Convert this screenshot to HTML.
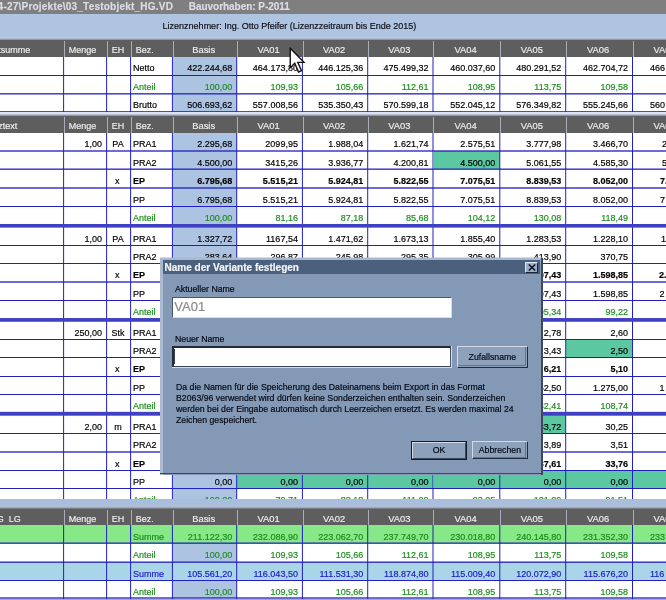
<!DOCTYPE html>
<html lang="de"><head><meta charset="utf-8"><title>Name der Variante festlegen</title><style>
html,body{margin:0;padding:0;background:#fff;}
body{width:666px;height:600px;overflow:hidden;position:relative;font-family:"Liberation Sans",sans-serif;}
#r{position:absolute;left:0;top:0;width:666px;height:600px;overflow:hidden;will-change:transform;}
#r div,#r svg{position:absolute;}
.t{white-space:pre;-webkit-text-stroke:0.18px currentColor;}
.ms{font-size:9.5px;line-height:12px;color:#050a16;-webkit-text-stroke:0.2px #050a16;transform:scaleX(0.9186);transform-origin:0 0;}
.ms.c{text-align:center;transform-origin:50% 0;}
</style></head><body><div id="r">
<div style="left:0px;top:0px;width:666px;height:14px;background:#7f7f7f;"></div>
<div class="t" style="top:1.13px;line-height:12px;font-size:10px;color:#dcdce6;font-weight:bold;left:-2.4px;letter-spacing:0.22px;">4-27\Projekte\03_Testobjekt_HG.VD</div>
<div class="t" style="top:1.13px;line-height:12px;font-size:10px;color:#dcdce6;font-weight:bold;left:188.8px;letter-spacing:-0.04px;">Bauvorhaben: P-2011</div>
<div style="left:0px;top:14px;width:666px;height:23px;background:#aec4e1;"></div>
<div style="left:0px;top:37px;width:666px;height:1px;background:#bccbe2;"></div>
<div style="left:0px;top:38px;width:666px;height:1px;background:#aab6ca;"></div>
<div style="left:0px;top:39px;width:666px;height:1px;background:#8e98aa;"></div>
<div class="t" style="top:20.38px;line-height:12px;font-size:9px;color:#101018;left:162.6px;">Lizenznehmer: Ing. Otto Pfeifer (Lizenzzeitraum bis Ende 2015)</div>
<div style="left:0px;top:40px;width:666px;height:17px;background:#5e5e5e;"></div>
<div style="left:64px;top:41px;width:1px;height:16px;background:#a9adb8;"></div>
<div style="left:107px;top:41px;width:1px;height:16px;background:#a9adb8;"></div>
<div style="left:131px;top:41px;width:1px;height:16px;background:#a9adb8;"></div>
<div style="left:173px;top:41px;width:1px;height:16px;background:#a9adb8;"></div>
<div style="left:237px;top:41px;width:1px;height:16px;background:#a9adb8;"></div>
<div style="left:303px;top:41px;width:1px;height:16px;background:#a9adb8;"></div>
<div style="left:368px;top:41px;width:1px;height:16px;background:#a9adb8;"></div>
<div style="left:433px;top:41px;width:1px;height:16px;background:#a9adb8;"></div>
<div style="left:500px;top:41px;width:1px;height:16px;background:#a9adb8;"></div>
<div style="left:566px;top:41px;width:1px;height:16px;background:#a9adb8;"></div>
<div style="left:633px;top:41px;width:1px;height:16px;background:#a9adb8;"></div>
<div class="t" style="top:44.48px;line-height:12px;font-size:9px;color:#ececec;left:-1.7px;">tsumme</div>
<div class="t" style="top:44.48px;line-height:12px;font-size:9px;color:#ececec;left:68.7px;">Menge</div>
<div class="t" style="top:44.48px;line-height:12px;font-size:9px;color:#ececec;left:111.7px;">EH</div>
<div class="t" style="top:44.48px;line-height:12px;font-size:9px;color:#ececec;left:135.7px;">Bez.</div>
<div class="t" style="top:44.34px;line-height:12px;font-size:9.4px;color:#ececec;left:103.65px;width:200px;text-align:center;">Basis</div>
<div class="t" style="top:44.34px;line-height:12px;font-size:9.4px;color:#ececec;left:168.64999999999998px;width:200px;text-align:center;">VA01</div>
<div class="t" style="top:44.34px;line-height:12px;font-size:9.4px;color:#ececec;left:234.14999999999998px;width:200px;text-align:center;">VA02</div>
<div class="t" style="top:44.34px;line-height:12px;font-size:9.4px;color:#ececec;left:299.45000000000005px;width:200px;text-align:center;">VA03</div>
<div class="t" style="top:44.34px;line-height:12px;font-size:9.4px;color:#ececec;left:365.5px;width:200px;text-align:center;">VA04</div>
<div class="t" style="top:44.34px;line-height:12px;font-size:9.4px;color:#ececec;left:431.85px;width:200px;text-align:center;">VA05</div>
<div class="t" style="top:44.34px;line-height:12px;font-size:9.4px;color:#ececec;left:498.20000000000005px;width:200px;text-align:center;">VA06</div>
<div class="t" style="top:44.34px;line-height:12px;font-size:9.4px;color:#ececec;left:564.6px;width:200px;text-align:center;">VA07</div>
<div style="left:173px;top:56.8px;width:64px;height:18.5px;background:#adc3e2;"></div>
<div class="t" style="top:62.38px;line-height:12px;font-size:9px;color:#000;left:133px;">Netto</div>
<div class="t" style="top:62.38px;line-height:12px;font-size:9px;color:#000;right:433.8px;text-align:right;">422.244,68</div>
<div class="t" style="top:62.38px;line-height:12px;font-size:9px;color:#000;right:368.1px;text-align:right;">464.173,80</div>
<div class="t" style="top:62.38px;line-height:12px;font-size:9px;color:#000;right:302.8px;text-align:right;">446.125,36</div>
<div class="t" style="top:62.38px;line-height:12px;font-size:9px;color:#000;right:237.5px;text-align:right;">475.499,32</div>
<div class="t" style="top:62.38px;line-height:12px;font-size:9px;color:#000;right:170.7px;text-align:right;">460.037,60</div>
<div class="t" style="top:62.38px;line-height:12px;font-size:9px;color:#000;right:104.79999999999995px;text-align:right;">480.291,52</div>
<div class="t" style="top:62.38px;line-height:12px;font-size:9px;color:#000;right:38.0px;text-align:right;">462.704,72</div>
<div class="t" style="top:62.38px;line-height:12px;font-size:9px;color:#000;left:650px;">466</div>
<div style="left:173px;top:75.3px;width:64px;height:18.5px;background:#adc3e2;"></div>
<div class="t" style="top:80.88px;line-height:12px;font-size:9px;color:#1e8c1e;left:133px;">Anteil</div>
<div class="t" style="top:80.88px;line-height:12px;font-size:9px;color:#1e8c1e;right:433.8px;text-align:right;">100,00</div>
<div class="t" style="top:80.88px;line-height:12px;font-size:9px;color:#1e8c1e;right:368.1px;text-align:right;">109,93</div>
<div class="t" style="top:80.88px;line-height:12px;font-size:9px;color:#1e8c1e;right:302.8px;text-align:right;">105,66</div>
<div class="t" style="top:80.88px;line-height:12px;font-size:9px;color:#1e8c1e;right:237.5px;text-align:right;">112,61</div>
<div class="t" style="top:80.88px;line-height:12px;font-size:9px;color:#1e8c1e;right:170.7px;text-align:right;">108,95</div>
<div class="t" style="top:80.88px;line-height:12px;font-size:9px;color:#1e8c1e;right:104.79999999999995px;text-align:right;">113,75</div>
<div class="t" style="top:80.88px;line-height:12px;font-size:9px;color:#1e8c1e;right:38.0px;text-align:right;">109,58</div>
<div style="left:173px;top:93.8px;width:64px;height:18.0px;background:#adc3e2;"></div>
<div class="t" style="top:99.38px;line-height:12px;font-size:9px;color:#000;left:133px;">Brutto</div>
<div class="t" style="top:99.38px;line-height:12px;font-size:9px;color:#000;right:433.8px;text-align:right;">506.693,62</div>
<div class="t" style="top:99.38px;line-height:12px;font-size:9px;color:#000;right:368.1px;text-align:right;">557.008,56</div>
<div class="t" style="top:99.38px;line-height:12px;font-size:9px;color:#000;right:302.8px;text-align:right;">535.350,43</div>
<div class="t" style="top:99.38px;line-height:12px;font-size:9px;color:#000;right:237.5px;text-align:right;">570.599,18</div>
<div class="t" style="top:99.38px;line-height:12px;font-size:9px;color:#000;right:170.7px;text-align:right;">552.045,12</div>
<div class="t" style="top:99.38px;line-height:12px;font-size:9px;color:#000;right:104.79999999999995px;text-align:right;">576.349,82</div>
<div class="t" style="top:99.38px;line-height:12px;font-size:9px;color:#000;right:38.0px;text-align:right;">555.245,66</div>
<div class="t" style="top:99.38px;line-height:12px;font-size:9px;color:#000;left:650px;">560</div>
<div style="left:63px;top:57px;width:1px;height:55px;background:#2020be;opacity:0.90;"></div>
<div style="left:64px;top:57px;width:1px;height:55px;background:#2020be;opacity:0.10;"></div>
<div style="left:106px;top:57px;width:1px;height:55px;background:#2020be;opacity:0.90;"></div>
<div style="left:107px;top:57px;width:1px;height:55px;background:#2020be;opacity:0.10;"></div>
<div style="left:130px;top:57px;width:1px;height:55px;background:#2020be;opacity:0.90;"></div>
<div style="left:131px;top:57px;width:1px;height:55px;background:#2020be;opacity:0.10;"></div>
<div style="left:171px;top:57px;width:1px;height:55px;background:#2020be;opacity:0.10;"></div>
<div style="left:172px;top:57px;width:1px;height:55px;background:#2020be;opacity:0.90;"></div>
<div style="left:236px;top:57px;width:1px;height:55px;background:#2020be;opacity:0.80;"></div>
<div style="left:237px;top:57px;width:1px;height:55px;background:#2020be;opacity:0.20;"></div>
<div style="left:301px;top:57px;width:1px;height:55px;background:#2020be;opacity:0.10;"></div>
<div style="left:302px;top:57px;width:1px;height:55px;background:#2020be;opacity:0.90;"></div>
<div style="left:367px;top:57px;width:1px;height:55px;background:#2020be;opacity:0.80;"></div>
<div style="left:368px;top:57px;width:1px;height:55px;background:#2020be;opacity:0.20;"></div>
<div style="left:432px;top:57px;width:1px;height:55px;background:#2020be;opacity:0.50;"></div>
<div style="left:433px;top:57px;width:1px;height:55px;background:#2020be;opacity:0.50;"></div>
<div style="left:499px;top:57px;width:1px;height:55px;background:#2020be;opacity:0.70;"></div>
<div style="left:500px;top:57px;width:1px;height:55px;background:#2020be;opacity:0.30;"></div>
<div style="left:565px;top:57px;width:1px;height:55px;background:#2020be;opacity:0.80;"></div>
<div style="left:566px;top:57px;width:1px;height:55px;background:#2020be;opacity:0.20;"></div>
<div style="left:632px;top:57px;width:1px;height:55px;background:#2020be;"></div>
<div style="left:0px;top:75px;width:666px;height:1px;background:#2020be;"></div>
<div style="left:0px;top:93px;width:666px;height:1px;background:#2020be;opacity:0.81;"></div>
<div style="left:0px;top:94px;width:666px;height:1px;background:#2020be;opacity:0.49;"></div>
<div style="left:0px;top:111px;width:666px;height:1px;background:#2020be;opacity:0.81;"></div>
<div style="left:0px;top:112px;width:666px;height:1px;background:#2020be;opacity:0.49;"></div>
<div style="left:0px;top:112px;width:666px;height:3px;background:#dde4f0;"></div>
<div style="left:0px;top:114px;width:666px;height:1px;background:#b4bedc;"></div>
<div style="left:0px;top:115px;width:666px;height:1px;background:#8b98c4;"></div>
<div style="left:0px;top:116px;width:666px;height:16.6px;background:#5e5e5e;"></div>
<div style="left:64px;top:117px;width:1px;height:15.600000000000001px;background:#a9adb8;"></div>
<div style="left:107px;top:117px;width:1px;height:15.600000000000001px;background:#a9adb8;"></div>
<div style="left:131px;top:117px;width:1px;height:15.600000000000001px;background:#a9adb8;"></div>
<div style="left:173px;top:117px;width:1px;height:15.600000000000001px;background:#a9adb8;"></div>
<div style="left:237px;top:117px;width:1px;height:15.600000000000001px;background:#a9adb8;"></div>
<div style="left:303px;top:117px;width:1px;height:15.600000000000001px;background:#a9adb8;"></div>
<div style="left:368px;top:117px;width:1px;height:15.600000000000001px;background:#a9adb8;"></div>
<div style="left:433px;top:117px;width:1px;height:15.600000000000001px;background:#a9adb8;"></div>
<div style="left:500px;top:117px;width:1px;height:15.600000000000001px;background:#a9adb8;"></div>
<div style="left:566px;top:117px;width:1px;height:15.600000000000001px;background:#a9adb8;"></div>
<div style="left:633px;top:117px;width:1px;height:15.600000000000001px;background:#a9adb8;"></div>
<div class="t" style="top:120.48px;line-height:12px;font-size:9px;color:#ececec;left:-1.7px;">ztext</div>
<div class="t" style="top:120.48px;line-height:12px;font-size:9px;color:#ececec;left:68.7px;">Menge</div>
<div class="t" style="top:120.48px;line-height:12px;font-size:9px;color:#ececec;left:111.7px;">EH</div>
<div class="t" style="top:120.48px;line-height:12px;font-size:9px;color:#ececec;left:135.7px;">Bez.</div>
<div class="t" style="top:120.34px;line-height:12px;font-size:9.4px;color:#ececec;left:103.65px;width:200px;text-align:center;">Basis</div>
<div class="t" style="top:120.34px;line-height:12px;font-size:9.4px;color:#ececec;left:168.64999999999998px;width:200px;text-align:center;">VA01</div>
<div class="t" style="top:120.34px;line-height:12px;font-size:9.4px;color:#ececec;left:234.14999999999998px;width:200px;text-align:center;">VA02</div>
<div class="t" style="top:120.34px;line-height:12px;font-size:9.4px;color:#ececec;left:299.45000000000005px;width:200px;text-align:center;">VA03</div>
<div class="t" style="top:120.34px;line-height:12px;font-size:9.4px;color:#ececec;left:365.5px;width:200px;text-align:center;">VA04</div>
<div class="t" style="top:120.34px;line-height:12px;font-size:9.4px;color:#ececec;left:431.85px;width:200px;text-align:center;">VA05</div>
<div class="t" style="top:120.34px;line-height:12px;font-size:9.4px;color:#ececec;left:498.20000000000005px;width:200px;text-align:center;">VA06</div>
<div class="t" style="top:120.34px;line-height:12px;font-size:9.4px;color:#ececec;left:564.6px;width:200px;text-align:center;">VA07</div>
<div style="left:173px;top:132.5px;width:64px;height:18.5px;background:#adc3e2;"></div>
<div class="t" style="top:138.08px;line-height:12px;font-size:9px;color:#000;right:563.9px;text-align:right;">1,00</div>
<div class="t" style="top:138.08px;line-height:12px;font-size:9px;color:#000;left:18.0px;width:200px;text-align:center;">PA</div>
<div class="t" style="top:138.08px;line-height:12px;font-size:9px;color:#000;left:133px;">PRA1</div>
<div class="t" style="top:138.08px;line-height:12px;font-size:9px;color:#000;right:433.8px;text-align:right;">2.295,68</div>
<div class="t" style="top:138.08px;line-height:12px;font-size:9px;color:#000;right:368.1px;text-align:right;">2099,95</div>
<div class="t" style="top:138.08px;line-height:12px;font-size:9px;color:#000;right:302.8px;text-align:right;">1.988,04</div>
<div class="t" style="top:138.08px;line-height:12px;font-size:9px;color:#000;right:237.5px;text-align:right;">1.621,74</div>
<div class="t" style="top:138.08px;line-height:12px;font-size:9px;color:#000;right:170.7px;text-align:right;">2.575,51</div>
<div class="t" style="top:138.08px;line-height:12px;font-size:9px;color:#000;right:104.79999999999995px;text-align:right;">3.777,98</div>
<div class="t" style="top:138.08px;line-height:12px;font-size:9px;color:#000;right:38.0px;text-align:right;">3.466,70</div>
<div class="t" style="top:138.08px;line-height:12px;font-size:9px;color:#000;left:662px;">2</div>
<div style="left:173px;top:151px;width:64px;height:18.19999999999999px;background:#adc3e2;"></div>
<div style="left:434px;top:151px;width:66px;height:18.19999999999999px;background:#5cc8a2;"></div>
<div class="t" style="top:156.58px;line-height:12px;font-size:9px;color:#000;left:133px;">PRA2</div>
<div class="t" style="top:156.58px;line-height:12px;font-size:9px;color:#000;right:433.8px;text-align:right;">4.500,00</div>
<div class="t" style="top:156.58px;line-height:12px;font-size:9px;color:#000;right:368.1px;text-align:right;">3415,26</div>
<div class="t" style="top:156.58px;line-height:12px;font-size:9px;color:#000;right:302.8px;text-align:right;">3.936,77</div>
<div class="t" style="top:156.58px;line-height:12px;font-size:9px;color:#000;right:237.5px;text-align:right;">4.200,81</div>
<div class="t" style="top:156.58px;line-height:12px;font-size:9px;color:#000;right:170.7px;text-align:right;">4.500,00</div>
<div class="t" style="top:156.58px;line-height:12px;font-size:9px;color:#000;right:104.79999999999995px;text-align:right;">5.061,55</div>
<div class="t" style="top:156.58px;line-height:12px;font-size:9px;color:#000;right:38.0px;text-align:right;">4.585,30</div>
<div class="t" style="top:156.58px;line-height:12px;font-size:9px;color:#000;left:662px;">5</div>
<div style="left:173px;top:169.2px;width:64px;height:18.80000000000001px;background:#adc3e2;"></div>
<div class="t" style="top:174.78px;line-height:12px;font-size:9px;color:#000;left:17.299999999999997px;width:200px;text-align:center;">x</div>
<div class="t" style="top:174.78px;line-height:12px;font-size:9px;color:#000;font-weight:bold;left:133px;">EP</div>
<div class="t" style="top:174.78px;line-height:12px;font-size:9px;color:#000;font-weight:bold;right:433.8px;text-align:right;">6.795,68</div>
<div class="t" style="top:174.78px;line-height:12px;font-size:9px;color:#000;font-weight:bold;right:368.1px;text-align:right;">5.515,21</div>
<div class="t" style="top:174.78px;line-height:12px;font-size:9px;color:#000;font-weight:bold;right:302.8px;text-align:right;">5.924,81</div>
<div class="t" style="top:174.78px;line-height:12px;font-size:9px;color:#000;font-weight:bold;right:237.5px;text-align:right;">5.822,55</div>
<div class="t" style="top:174.78px;line-height:12px;font-size:9px;color:#000;font-weight:bold;right:170.7px;text-align:right;">7.075,51</div>
<div class="t" style="top:174.78px;line-height:12px;font-size:9px;color:#000;font-weight:bold;right:104.79999999999995px;text-align:right;">8.839,53</div>
<div class="t" style="top:174.78px;line-height:12px;font-size:9px;color:#000;font-weight:bold;right:38.0px;text-align:right;">8.052,00</div>
<div class="t" style="top:174.78px;line-height:12px;font-size:9px;color:#000;font-weight:bold;left:660px;">7.</div>
<div style="left:173px;top:188px;width:64px;height:18.30000000000001px;background:#adc3e2;"></div>
<div class="t" style="top:193.58px;line-height:12px;font-size:9px;color:#000;left:133px;">PP</div>
<div class="t" style="top:193.58px;line-height:12px;font-size:9px;color:#000;right:433.8px;text-align:right;">6.795,68</div>
<div class="t" style="top:193.58px;line-height:12px;font-size:9px;color:#000;right:368.1px;text-align:right;">5.515,21</div>
<div class="t" style="top:193.58px;line-height:12px;font-size:9px;color:#000;right:302.8px;text-align:right;">5.924,81</div>
<div class="t" style="top:193.58px;line-height:12px;font-size:9px;color:#000;right:237.5px;text-align:right;">5.822,55</div>
<div class="t" style="top:193.58px;line-height:12px;font-size:9px;color:#000;right:170.7px;text-align:right;">7.075,51</div>
<div class="t" style="top:193.58px;line-height:12px;font-size:9px;color:#000;right:104.79999999999995px;text-align:right;">8.839,53</div>
<div class="t" style="top:193.58px;line-height:12px;font-size:9px;color:#000;right:38.0px;text-align:right;">8.052,00</div>
<div class="t" style="top:193.58px;line-height:12px;font-size:9px;color:#000;left:660px;">7</div>
<div style="left:173px;top:206.3px;width:64px;height:17.899999999999977px;background:#adc3e2;"></div>
<div class="t" style="top:211.88px;line-height:12px;font-size:9px;color:#1e8c1e;left:133px;">Anteil</div>
<div class="t" style="top:211.88px;line-height:12px;font-size:9px;color:#1e8c1e;right:433.8px;text-align:right;">100,00</div>
<div class="t" style="top:211.88px;line-height:12px;font-size:9px;color:#1e8c1e;right:368.1px;text-align:right;">81,16</div>
<div class="t" style="top:211.88px;line-height:12px;font-size:9px;color:#1e8c1e;right:302.8px;text-align:right;">87,18</div>
<div class="t" style="top:211.88px;line-height:12px;font-size:9px;color:#1e8c1e;right:237.5px;text-align:right;">85,68</div>
<div class="t" style="top:211.88px;line-height:12px;font-size:9px;color:#1e8c1e;right:170.7px;text-align:right;">104,12</div>
<div class="t" style="top:211.88px;line-height:12px;font-size:9px;color:#1e8c1e;right:104.79999999999995px;text-align:right;">130,08</div>
<div class="t" style="top:211.88px;line-height:12px;font-size:9px;color:#1e8c1e;right:38.0px;text-align:right;">118,49</div>
<div style="left:173px;top:227.3px;width:64px;height:18.19999999999999px;background:#adc3e2;"></div>
<div class="t" style="top:232.88px;line-height:12px;font-size:9px;color:#000;right:563.9px;text-align:right;">1,00</div>
<div class="t" style="top:232.88px;line-height:12px;font-size:9px;color:#000;left:18.0px;width:200px;text-align:center;">PA</div>
<div class="t" style="top:232.88px;line-height:12px;font-size:9px;color:#000;left:133px;">PRA1</div>
<div class="t" style="top:232.88px;line-height:12px;font-size:9px;color:#000;right:433.8px;text-align:right;">1.327,72</div>
<div class="t" style="top:232.88px;line-height:12px;font-size:9px;color:#000;right:368.1px;text-align:right;">1167,54</div>
<div class="t" style="top:232.88px;line-height:12px;font-size:9px;color:#000;right:302.8px;text-align:right;">1.471,62</div>
<div class="t" style="top:232.88px;line-height:12px;font-size:9px;color:#000;right:237.5px;text-align:right;">1.673,13</div>
<div class="t" style="top:232.88px;line-height:12px;font-size:9px;color:#000;right:170.7px;text-align:right;">1.855,40</div>
<div class="t" style="top:232.88px;line-height:12px;font-size:9px;color:#000;right:104.79999999999995px;text-align:right;">1.283,53</div>
<div class="t" style="top:232.88px;line-height:12px;font-size:9px;color:#000;right:38.0px;text-align:right;">1.228,10</div>
<div class="t" style="top:232.88px;line-height:12px;font-size:9px;color:#000;left:661px;">1</div>
<div style="left:173px;top:245.5px;width:64px;height:18.0px;background:#adc3e2;"></div>
<div class="t" style="top:251.08px;line-height:12px;font-size:9px;color:#000;left:133px;">PRA2</div>
<div class="t" style="top:251.08px;line-height:12px;font-size:9px;color:#000;right:433.8px;text-align:right;">283,64</div>
<div class="t" style="top:251.08px;line-height:12px;font-size:9px;color:#000;right:368.1px;text-align:right;">296,87</div>
<div class="t" style="top:251.08px;line-height:12px;font-size:9px;color:#000;right:302.8px;text-align:right;">245,98</div>
<div class="t" style="top:251.08px;line-height:12px;font-size:9px;color:#000;right:237.5px;text-align:right;">295,35</div>
<div class="t" style="top:251.08px;line-height:12px;font-size:9px;color:#000;right:170.7px;text-align:right;">305,99</div>
<div class="t" style="top:251.08px;line-height:12px;font-size:9px;color:#000;right:104.79999999999995px;text-align:right;">413,90</div>
<div class="t" style="top:251.08px;line-height:12px;font-size:9px;color:#000;right:38.0px;text-align:right;">370,75</div>
<div style="left:173px;top:263.5px;width:64px;height:18.5px;background:#adc3e2;"></div>
<div class="t" style="top:269.08px;line-height:12px;font-size:9px;color:#000;left:17.299999999999997px;width:200px;text-align:center;">x</div>
<div class="t" style="top:269.08px;line-height:12px;font-size:9px;color:#000;font-weight:bold;left:133px;">EP</div>
<div class="t" style="top:269.08px;line-height:12px;font-size:9px;color:#000;font-weight:bold;right:104.79999999999995px;text-align:right;">1.697,43</div>
<div class="t" style="top:269.08px;line-height:12px;font-size:9px;color:#000;font-weight:bold;right:38.0px;text-align:right;">1.598,85</div>
<div class="t" style="top:269.08px;line-height:12px;font-size:9px;color:#000;font-weight:bold;left:659px;">2.</div>
<div style="left:173px;top:282px;width:64px;height:18.30000000000001px;background:#adc3e2;"></div>
<div class="t" style="top:287.58px;line-height:12px;font-size:9px;color:#000;left:133px;">PP</div>
<div class="t" style="top:287.58px;line-height:12px;font-size:9px;color:#000;right:104.79999999999995px;text-align:right;">1.697,43</div>
<div class="t" style="top:287.58px;line-height:12px;font-size:9px;color:#000;right:38.0px;text-align:right;">1.598,85</div>
<div class="t" style="top:287.58px;line-height:12px;font-size:9px;color:#000;left:659.5px;">2</div>
<div style="left:173px;top:300.3px;width:64px;height:17.899999999999977px;background:#adc3e2;"></div>
<div class="t" style="top:305.88px;line-height:12px;font-size:9px;color:#1e8c1e;left:133px;">Anteil</div>
<div class="t" style="top:305.88px;line-height:12px;font-size:9px;color:#1e8c1e;right:104.79999999999995px;text-align:right;">105,34</div>
<div class="t" style="top:305.88px;line-height:12px;font-size:9px;color:#1e8c1e;right:38.0px;text-align:right;">99,22</div>
<div style="left:173px;top:321.5px;width:64px;height:17.80000000000001px;background:#adc3e2;"></div>
<div class="t" style="top:327.08px;line-height:12px;font-size:9px;color:#000;right:563.9px;text-align:right;">250,00</div>
<div class="t" style="top:327.08px;line-height:12px;font-size:9px;color:#000;left:18.0px;width:200px;text-align:center;">Stk</div>
<div class="t" style="top:327.08px;line-height:12px;font-size:9px;color:#000;left:133px;">PRA1</div>
<div class="t" style="top:327.08px;line-height:12px;font-size:9px;color:#000;right:104.79999999999995px;text-align:right;">2,78</div>
<div class="t" style="top:327.08px;line-height:12px;font-size:9px;color:#000;right:38.0px;text-align:right;">2,60</div>
<div style="left:173px;top:339.3px;width:64px;height:18.399999999999977px;background:#adc3e2;"></div>
<div style="left:566px;top:339.3px;width:66px;height:18.399999999999977px;background:#5cc8a2;"></div>
<div class="t" style="top:344.88px;line-height:12px;font-size:9px;color:#000;left:133px;">PRA2</div>
<div class="t" style="top:344.88px;line-height:12px;font-size:9px;color:#000;right:104.79999999999995px;text-align:right;">3,43</div>
<div class="t" style="top:344.88px;line-height:12px;font-size:9px;color:#000;right:38.0px;text-align:right;">2,50</div>
<div style="left:173px;top:357.7px;width:64px;height:18.80000000000001px;background:#adc3e2;"></div>
<div class="t" style="top:363.28px;line-height:12px;font-size:9px;color:#000;left:17.299999999999997px;width:200px;text-align:center;">x</div>
<div class="t" style="top:363.28px;line-height:12px;font-size:9px;color:#000;font-weight:bold;left:133px;">EP</div>
<div class="t" style="top:363.28px;line-height:12px;font-size:9px;color:#000;font-weight:bold;right:104.79999999999995px;text-align:right;">6,21</div>
<div class="t" style="top:363.28px;line-height:12px;font-size:9px;color:#000;font-weight:bold;right:38.0px;text-align:right;">5,10</div>
<div style="left:173px;top:376.5px;width:64px;height:18.0px;background:#adc3e2;"></div>
<div class="t" style="top:382.08px;line-height:12px;font-size:9px;color:#000;left:133px;">PP</div>
<div class="t" style="top:382.08px;line-height:12px;font-size:9px;color:#000;right:104.79999999999995px;text-align:right;">1.552,50</div>
<div class="t" style="top:382.08px;line-height:12px;font-size:9px;color:#000;right:38.0px;text-align:right;">1.275,00</div>
<div class="t" style="top:382.08px;line-height:12px;font-size:9px;color:#000;left:659.5px;">1</div>
<div style="left:173px;top:394.5px;width:64px;height:17.600000000000023px;background:#adc3e2;"></div>
<div class="t" style="top:400.08px;line-height:12px;font-size:9px;color:#1e8c1e;left:133px;">Anteil</div>
<div class="t" style="top:400.08px;line-height:12px;font-size:9px;color:#1e8c1e;right:104.79999999999995px;text-align:right;">132,41</div>
<div class="t" style="top:400.08px;line-height:12px;font-size:9px;color:#1e8c1e;right:38.0px;text-align:right;">108,74</div>
<div style="left:173px;top:415.4px;width:64px;height:18.100000000000023px;background:#adc3e2;"></div>
<div style="left:500px;top:415.4px;width:66px;height:18.100000000000023px;background:#5cc8a2;"></div>
<div class="t" style="top:420.98px;line-height:12px;font-size:9px;color:#000;right:563.9px;text-align:right;">2,00</div>
<div class="t" style="top:420.98px;line-height:12px;font-size:9px;color:#000;left:18.0px;width:200px;text-align:center;">m</div>
<div class="t" style="top:420.98px;line-height:12px;font-size:9px;color:#000;left:133px;">PRA1</div>
<div class="t" style="top:420.98px;line-height:12px;font-size:9px;color:#000;right:104.79999999999995px;text-align:right;">33,72</div>
<div class="t" style="top:420.98px;line-height:12px;font-size:9px;color:#000;right:38.0px;text-align:right;">30,25</div>
<div style="left:173px;top:433.5px;width:64px;height:18.5px;background:#adc3e2;"></div>
<div class="t" style="top:439.08px;line-height:12px;font-size:9px;color:#000;left:133px;">PRA2</div>
<div class="t" style="top:439.08px;line-height:12px;font-size:9px;color:#000;right:104.79999999999995px;text-align:right;">3,89</div>
<div class="t" style="top:439.08px;line-height:12px;font-size:9px;color:#000;right:38.0px;text-align:right;">3,51</div>
<div style="left:173px;top:452px;width:64px;height:18.30000000000001px;background:#adc3e2;"></div>
<div class="t" style="top:457.58px;line-height:12px;font-size:9px;color:#000;left:17.299999999999997px;width:200px;text-align:center;">x</div>
<div class="t" style="top:457.58px;line-height:12px;font-size:9px;color:#000;font-weight:bold;left:133px;">EP</div>
<div class="t" style="top:457.58px;line-height:12px;font-size:9px;color:#000;font-weight:bold;right:104.79999999999995px;text-align:right;">37,61</div>
<div class="t" style="top:457.58px;line-height:12px;font-size:9px;color:#000;font-weight:bold;right:38.0px;text-align:right;">33,76</div>
<div style="left:173px;top:470.3px;width:64px;height:18.19999999999999px;background:#adc3e2;"></div>
<div style="left:237px;top:470.3px;width:65px;height:18.19999999999999px;background:#5cc8a2;"></div>
<div style="left:303px;top:470.3px;width:65px;height:18.19999999999999px;background:#5cc8a2;"></div>
<div style="left:368px;top:470.3px;width:65px;height:18.19999999999999px;background:#5cc8a2;"></div>
<div style="left:434px;top:470.3px;width:66px;height:18.19999999999999px;background:#5cc8a2;"></div>
<div style="left:500px;top:470.3px;width:66px;height:18.19999999999999px;background:#5cc8a2;"></div>
<div style="left:566px;top:470.3px;width:66px;height:18.19999999999999px;background:#5cc8a2;"></div>
<div style="left:633px;top:470.3px;width:66px;height:18.19999999999999px;background:#5cc8a2;"></div>
<div class="t" style="top:475.88px;line-height:12px;font-size:9px;color:#000;left:133px;">PP</div>
<div class="t" style="top:475.88px;line-height:12px;font-size:9px;color:#000;right:433.8px;text-align:right;">0,00</div>
<div class="t" style="top:475.88px;line-height:12px;font-size:9px;color:#000;right:368.1px;text-align:right;">0,00</div>
<div class="t" style="top:475.88px;line-height:12px;font-size:9px;color:#000;right:302.8px;text-align:right;">0,00</div>
<div class="t" style="top:475.88px;line-height:12px;font-size:9px;color:#000;right:237.5px;text-align:right;">0,00</div>
<div class="t" style="top:475.88px;line-height:12px;font-size:9px;color:#000;right:170.7px;text-align:right;">0,00</div>
<div class="t" style="top:475.88px;line-height:12px;font-size:9px;color:#000;right:104.79999999999995px;text-align:right;">0,00</div>
<div class="t" style="top:475.88px;line-height:12px;font-size:9px;color:#000;right:38.0px;text-align:right;">0,00</div>
<div style="left:173px;top:488.5px;width:64px;height:18.5px;background:#adc3e2;"></div>
<div class="t" style="top:494.08px;line-height:12px;font-size:9px;color:#1e8c1e;left:133px;">Anteil</div>
<div class="t" style="top:494.08px;line-height:12px;font-size:9px;color:#1e8c1e;right:433.8px;text-align:right;">100,00</div>
<div class="t" style="top:494.08px;line-height:12px;font-size:9px;color:#1e8c1e;right:368.1px;text-align:right;">70,71</div>
<div class="t" style="top:494.08px;line-height:12px;font-size:9px;color:#1e8c1e;right:302.8px;text-align:right;">82,18</div>
<div class="t" style="top:494.08px;line-height:12px;font-size:9px;color:#1e8c1e;right:237.5px;text-align:right;">111,09</div>
<div class="t" style="top:494.08px;line-height:12px;font-size:9px;color:#1e8c1e;right:170.7px;text-align:right;">93,05</div>
<div class="t" style="top:494.08px;line-height:12px;font-size:9px;color:#1e8c1e;right:104.79999999999995px;text-align:right;">121,09</div>
<div class="t" style="top:494.08px;line-height:12px;font-size:9px;color:#1e8c1e;right:38.0px;text-align:right;">91,51</div>
<div style="left:63px;top:133px;width:1px;height:367px;background:#2020be;opacity:0.90;"></div>
<div style="left:64px;top:133px;width:1px;height:367px;background:#2020be;opacity:0.10;"></div>
<div style="left:106px;top:133px;width:1px;height:367px;background:#2020be;opacity:0.90;"></div>
<div style="left:107px;top:133px;width:1px;height:367px;background:#2020be;opacity:0.10;"></div>
<div style="left:130px;top:133px;width:1px;height:367px;background:#2020be;opacity:0.90;"></div>
<div style="left:131px;top:133px;width:1px;height:367px;background:#2020be;opacity:0.10;"></div>
<div style="left:171px;top:133px;width:1px;height:367px;background:#2020be;opacity:0.10;"></div>
<div style="left:172px;top:133px;width:1px;height:367px;background:#2020be;opacity:0.90;"></div>
<div style="left:236px;top:133px;width:1px;height:367px;background:#2020be;opacity:0.80;"></div>
<div style="left:237px;top:133px;width:1px;height:367px;background:#2020be;opacity:0.20;"></div>
<div style="left:301px;top:133px;width:1px;height:367px;background:#2020be;opacity:0.10;"></div>
<div style="left:302px;top:133px;width:1px;height:367px;background:#2020be;opacity:0.90;"></div>
<div style="left:367px;top:133px;width:1px;height:367px;background:#2020be;opacity:0.80;"></div>
<div style="left:368px;top:133px;width:1px;height:367px;background:#2020be;opacity:0.20;"></div>
<div style="left:432px;top:133px;width:1px;height:367px;background:#2020be;opacity:0.50;"></div>
<div style="left:433px;top:133px;width:1px;height:367px;background:#2020be;opacity:0.50;"></div>
<div style="left:499px;top:133px;width:1px;height:367px;background:#2020be;opacity:0.70;"></div>
<div style="left:500px;top:133px;width:1px;height:367px;background:#2020be;opacity:0.30;"></div>
<div style="left:565px;top:133px;width:1px;height:367px;background:#2020be;opacity:0.80;"></div>
<div style="left:566px;top:133px;width:1px;height:367px;background:#2020be;opacity:0.20;"></div>
<div style="left:632px;top:133px;width:1px;height:367px;background:#2020be;"></div>
<div style="left:0px;top:150px;width:666px;height:1px;background:#2020be;opacity:0.66;"></div>
<div style="left:0px;top:151px;width:666px;height:1px;background:#2020be;opacity:0.66;"></div>
<div style="left:0px;top:168px;width:666px;height:1px;background:#2020be;opacity:0.49;"></div>
<div style="left:0px;top:169px;width:666px;height:1px;background:#2020be;opacity:0.81;"></div>
<div style="left:0px;top:187px;width:666px;height:1px;background:#2020be;opacity:0.66;"></div>
<div style="left:0px;top:188px;width:666px;height:1px;background:#2020be;opacity:0.66;"></div>
<div style="left:0px;top:206px;width:666px;height:1px;background:#2020be;"></div>
<div style="left:0px;top:224px;width:666px;height:1px;background:#4040c4;"></div>
<div style="left:0px;top:225px;width:666px;height:1px;background:#4040c4;"></div>
<div style="left:0px;top:226px;width:666px;height:1px;background:#4040c4;"></div>
<div style="left:0px;top:227px;width:666px;height:1px;background:#4040c4;opacity:0.62;"></div>
<div style="left:0px;top:245px;width:666px;height:1px;background:#2020be;"></div>
<div style="left:0px;top:263px;width:666px;height:1px;background:#2020be;"></div>
<div style="left:0px;top:281px;width:666px;height:1px;background:#2020be;opacity:0.66;"></div>
<div style="left:0px;top:282px;width:666px;height:1px;background:#2020be;opacity:0.66;"></div>
<div style="left:0px;top:300px;width:666px;height:1px;background:#2020be;"></div>
<div style="left:0px;top:318px;width:666px;height:1px;background:#4040c4;opacity:0.97;"></div>
<div style="left:0px;top:319px;width:666px;height:1px;background:#4040c4;"></div>
<div style="left:0px;top:320px;width:666px;height:1px;background:#4040c4;"></div>
<div style="left:0px;top:321px;width:666px;height:1px;background:#4040c4;opacity:0.77;"></div>
<div style="left:0px;top:339px;width:666px;height:1px;background:#2020be;"></div>
<div style="left:0px;top:357px;width:666px;height:1px;background:#2020be;"></div>
<div style="left:0px;top:376px;width:666px;height:1px;background:#2020be;"></div>
<div style="left:0px;top:394px;width:666px;height:1px;background:#2020be;"></div>
<div style="left:0px;top:411px;width:666px;height:1px;background:#4040c4;opacity:0.17;"></div>
<div style="left:0px;top:412px;width:666px;height:1px;background:#4040c4;"></div>
<div style="left:0px;top:413px;width:666px;height:1px;background:#4040c4;"></div>
<div style="left:0px;top:414px;width:666px;height:1px;background:#4040c4;"></div>
<div style="left:0px;top:415px;width:666px;height:1px;background:#4040c4;opacity:0.70;"></div>
<div style="left:0px;top:433px;width:666px;height:1px;background:#2020be;"></div>
<div style="left:0px;top:451px;width:666px;height:1px;background:#2020be;opacity:0.66;"></div>
<div style="left:0px;top:452px;width:666px;height:1px;background:#2020be;opacity:0.66;"></div>
<div style="left:0px;top:470px;width:666px;height:1px;background:#2020be;"></div>
<div style="left:0px;top:488px;width:666px;height:1px;background:#2020be;"></div>
<div style="left:0px;top:499px;width:666px;height:6px;background:#a9bedd;"></div>
<div style="left:0px;top:505px;width:666px;height:1px;background:#afbed6;"></div>
<div style="left:0px;top:506px;width:666px;height:1px;background:#b2bed0;"></div>
<div style="left:0px;top:507px;width:666px;height:1px;background:#a0a8b6;"></div>
<div style="left:0px;top:508px;width:666px;height:1px;background:#787e88;"></div>
<div style="left:0px;top:509px;width:666px;height:16px;background:#5e5e5e;"></div>
<div style="left:64px;top:510px;width:1px;height:15px;background:#a9adb8;"></div>
<div style="left:107px;top:510px;width:1px;height:15px;background:#a9adb8;"></div>
<div style="left:131px;top:510px;width:1px;height:15px;background:#a9adb8;"></div>
<div style="left:173px;top:510px;width:1px;height:15px;background:#a9adb8;"></div>
<div style="left:237px;top:510px;width:1px;height:15px;background:#a9adb8;"></div>
<div style="left:303px;top:510px;width:1px;height:15px;background:#a9adb8;"></div>
<div style="left:368px;top:510px;width:1px;height:15px;background:#a9adb8;"></div>
<div style="left:433px;top:510px;width:1px;height:15px;background:#a9adb8;"></div>
<div style="left:500px;top:510px;width:1px;height:15px;background:#a9adb8;"></div>
<div style="left:566px;top:510px;width:1px;height:15px;background:#a9adb8;"></div>
<div style="left:633px;top:510px;width:1px;height:15px;background:#a9adb8;"></div>
<div class="t" style="top:513.48px;line-height:12px;font-size:9px;color:#ececec;left:-3.2px;">G  LG</div>
<div class="t" style="top:513.48px;line-height:12px;font-size:9px;color:#ececec;left:68.7px;">Menge</div>
<div class="t" style="top:513.48px;line-height:12px;font-size:9px;color:#ececec;left:111.7px;">EH</div>
<div class="t" style="top:513.48px;line-height:12px;font-size:9px;color:#ececec;left:135.7px;">Bez.</div>
<div class="t" style="top:513.34px;line-height:12px;font-size:9.4px;color:#ececec;left:103.65px;width:200px;text-align:center;">Basis</div>
<div class="t" style="top:513.34px;line-height:12px;font-size:9.4px;color:#ececec;left:168.64999999999998px;width:200px;text-align:center;">VA01</div>
<div class="t" style="top:513.34px;line-height:12px;font-size:9.4px;color:#ececec;left:234.14999999999998px;width:200px;text-align:center;">VA02</div>
<div class="t" style="top:513.34px;line-height:12px;font-size:9.4px;color:#ececec;left:299.45000000000005px;width:200px;text-align:center;">VA03</div>
<div class="t" style="top:513.34px;line-height:12px;font-size:9.4px;color:#ececec;left:365.5px;width:200px;text-align:center;">VA04</div>
<div class="t" style="top:513.34px;line-height:12px;font-size:9.4px;color:#ececec;left:431.85px;width:200px;text-align:center;">VA05</div>
<div class="t" style="top:513.34px;line-height:12px;font-size:9.4px;color:#ececec;left:498.20000000000005px;width:200px;text-align:center;">VA06</div>
<div class="t" style="top:513.34px;line-height:12px;font-size:9.4px;color:#ececec;left:564.6px;width:200px;text-align:center;">VA07</div>
<div style="left:0px;top:525px;width:666px;height:18.200000000000045px;background:#86e886;"></div>
<div class="t" style="top:530.58px;line-height:12px;font-size:9px;color:#1e8c1e;left:133px;">Summe</div>
<div class="t" style="top:530.58px;line-height:12px;font-size:9px;color:#1e8c1e;right:433.8px;text-align:right;">211.122,30</div>
<div class="t" style="top:530.58px;line-height:12px;font-size:9px;color:#1e8c1e;right:368.1px;text-align:right;">232.086,90</div>
<div class="t" style="top:530.58px;line-height:12px;font-size:9px;color:#1e8c1e;right:302.8px;text-align:right;">223.062,70</div>
<div class="t" style="top:530.58px;line-height:12px;font-size:9px;color:#1e8c1e;right:237.5px;text-align:right;">237.749,70</div>
<div class="t" style="top:530.58px;line-height:12px;font-size:9px;color:#1e8c1e;right:170.7px;text-align:right;">230.018,80</div>
<div class="t" style="top:530.58px;line-height:12px;font-size:9px;color:#1e8c1e;right:104.79999999999995px;text-align:right;">240.145,80</div>
<div class="t" style="top:530.58px;line-height:12px;font-size:9px;color:#1e8c1e;right:38.0px;text-align:right;">231.352,30</div>
<div class="t" style="top:530.58px;line-height:12px;font-size:9px;color:#1e8c1e;left:650px;">233</div>
<div style="left:173px;top:543.2px;width:64px;height:19.0px;background:#adc3e2;"></div>
<div class="t" style="top:548.78px;line-height:12px;font-size:9px;color:#1e8c1e;left:133px;">Anteil</div>
<div class="t" style="top:548.78px;line-height:12px;font-size:9px;color:#1e8c1e;right:433.8px;text-align:right;">100,00</div>
<div class="t" style="top:548.78px;line-height:12px;font-size:9px;color:#1e8c1e;right:368.1px;text-align:right;">109,93</div>
<div class="t" style="top:548.78px;line-height:12px;font-size:9px;color:#1e8c1e;right:302.8px;text-align:right;">105,66</div>
<div class="t" style="top:548.78px;line-height:12px;font-size:9px;color:#1e8c1e;right:237.5px;text-align:right;">112,61</div>
<div class="t" style="top:548.78px;line-height:12px;font-size:9px;color:#1e8c1e;right:170.7px;text-align:right;">108,95</div>
<div class="t" style="top:548.78px;line-height:12px;font-size:9px;color:#1e8c1e;right:104.79999999999995px;text-align:right;">113,75</div>
<div class="t" style="top:548.78px;line-height:12px;font-size:9px;color:#1e8c1e;right:38.0px;text-align:right;">109,58</div>
<div style="left:0px;top:562.2px;width:666px;height:18.299999999999955px;background:#aad4e8;"></div>
<div class="t" style="top:567.78px;line-height:12px;font-size:9px;color:#1c1cc8;left:133px;">Summe</div>
<div class="t" style="top:567.78px;line-height:12px;font-size:9px;color:#1c1cc8;right:433.8px;text-align:right;">105.561,20</div>
<div class="t" style="top:567.78px;line-height:12px;font-size:9px;color:#1c1cc8;right:368.1px;text-align:right;">116.043,50</div>
<div class="t" style="top:567.78px;line-height:12px;font-size:9px;color:#1c1cc8;right:302.8px;text-align:right;">111.531,30</div>
<div class="t" style="top:567.78px;line-height:12px;font-size:9px;color:#1c1cc8;right:237.5px;text-align:right;">118.874,80</div>
<div class="t" style="top:567.78px;line-height:12px;font-size:9px;color:#1c1cc8;right:170.7px;text-align:right;">115.009,40</div>
<div class="t" style="top:567.78px;line-height:12px;font-size:9px;color:#1c1cc8;right:104.79999999999995px;text-align:right;">120.072,90</div>
<div class="t" style="top:567.78px;line-height:12px;font-size:9px;color:#1c1cc8;right:38.0px;text-align:right;">115.676,20</div>
<div class="t" style="top:567.78px;line-height:12px;font-size:9px;color:#1c1cc8;left:650px;">116</div>
<div style="left:173px;top:580.5px;width:64px;height:17.5px;background:#adc3e2;"></div>
<div class="t" style="top:586.08px;line-height:12px;font-size:9px;color:#1e8c1e;left:133px;">Anteil</div>
<div class="t" style="top:586.08px;line-height:12px;font-size:9px;color:#1e8c1e;right:433.8px;text-align:right;">100,00</div>
<div class="t" style="top:586.08px;line-height:12px;font-size:9px;color:#1e8c1e;right:368.1px;text-align:right;">109,93</div>
<div class="t" style="top:586.08px;line-height:12px;font-size:9px;color:#1e8c1e;right:302.8px;text-align:right;">105,66</div>
<div class="t" style="top:586.08px;line-height:12px;font-size:9px;color:#1e8c1e;right:237.5px;text-align:right;">112,61</div>
<div class="t" style="top:586.08px;line-height:12px;font-size:9px;color:#1e8c1e;right:170.7px;text-align:right;">108,95</div>
<div class="t" style="top:586.08px;line-height:12px;font-size:9px;color:#1e8c1e;right:104.79999999999995px;text-align:right;">113,75</div>
<div class="t" style="top:586.08px;line-height:12px;font-size:9px;color:#1e8c1e;right:38.0px;text-align:right;">109,58</div>
<div style="left:63px;top:525px;width:1px;height:75px;background:#2020be;opacity:0.90;"></div>
<div style="left:64px;top:525px;width:1px;height:75px;background:#2020be;opacity:0.10;"></div>
<div style="left:106px;top:525px;width:1px;height:75px;background:#2020be;opacity:0.90;"></div>
<div style="left:107px;top:525px;width:1px;height:75px;background:#2020be;opacity:0.10;"></div>
<div style="left:130px;top:525px;width:1px;height:75px;background:#2020be;opacity:0.90;"></div>
<div style="left:131px;top:525px;width:1px;height:75px;background:#2020be;opacity:0.10;"></div>
<div style="left:171px;top:525px;width:1px;height:75px;background:#2020be;opacity:0.10;"></div>
<div style="left:172px;top:525px;width:1px;height:75px;background:#2020be;opacity:0.90;"></div>
<div style="left:236px;top:525px;width:1px;height:75px;background:#2020be;opacity:0.80;"></div>
<div style="left:237px;top:525px;width:1px;height:75px;background:#2020be;opacity:0.20;"></div>
<div style="left:301px;top:525px;width:1px;height:75px;background:#2020be;opacity:0.10;"></div>
<div style="left:302px;top:525px;width:1px;height:75px;background:#2020be;opacity:0.90;"></div>
<div style="left:367px;top:525px;width:1px;height:75px;background:#2020be;opacity:0.80;"></div>
<div style="left:368px;top:525px;width:1px;height:75px;background:#2020be;opacity:0.20;"></div>
<div style="left:432px;top:525px;width:1px;height:75px;background:#2020be;opacity:0.50;"></div>
<div style="left:433px;top:525px;width:1px;height:75px;background:#2020be;opacity:0.50;"></div>
<div style="left:499px;top:525px;width:1px;height:75px;background:#2020be;opacity:0.70;"></div>
<div style="left:500px;top:525px;width:1px;height:75px;background:#2020be;opacity:0.30;"></div>
<div style="left:565px;top:525px;width:1px;height:75px;background:#2020be;opacity:0.80;"></div>
<div style="left:566px;top:525px;width:1px;height:75px;background:#2020be;opacity:0.20;"></div>
<div style="left:632px;top:525px;width:1px;height:75px;background:#2020be;"></div>
<div style="left:0px;top:542px;width:666px;height:1px;background:#2020be;opacity:0.49;"></div>
<div style="left:0px;top:543px;width:666px;height:1px;background:#2020be;opacity:0.81;"></div>
<div style="left:0px;top:561px;width:666px;height:1px;background:#2020be;opacity:0.49;"></div>
<div style="left:0px;top:562px;width:666px;height:1px;background:#2020be;opacity:0.81;"></div>
<div style="left:0px;top:580px;width:666px;height:1px;background:#2020be;"></div>
<div style="left:0px;top:597px;width:666px;height:1px;background:#2020be;opacity:0.66;"></div>
<div style="left:0px;top:598px;width:666px;height:1px;background:#2020be;opacity:0.66;"></div>
<div style="left:0px;top:599px;width:666px;height:1px;background:#a4a4e8;"></div>
<svg style="left:289px;top:47px" width="20" height="30" viewBox="0 0 16 24"><path d="M1 1 L1 16.5 L4.6 13 L7.6 20 L10 19 L7 12.3 L12 12.3 Z" fill="#fff" stroke="#111" stroke-width="1.1" stroke-linejoin="miter"/></svg>
<div id="dlg" style="left:160px;top:257px;width:382.5px;height:217.5px;">
<div style="left:0.00px;top:0.00px;width:382.50px;height:1.00px;background:#a9b9cf;opacity:0.45;"></div>
<div style="left:0.00px;top:1.00px;width:382.50px;height:216.50px;background:#8499b5;"></div>
<div style="left:0.00px;top:1.00px;width:382.50px;height:2.00px;background:#a9b9cf;"></div>
<div style="left:0.00px;top:1.00px;width:2.50px;height:216.50px;background:#a9b9cf;"></div>
<div style="left:381.00px;top:1.00px;width:1.50px;height:216.50px;background:#3c485c;"></div>
<div style="left:0.00px;top:216.30px;width:382.50px;height:1.20px;background:#3c485c;"></div>
<div style="left:2.50px;top:3.00px;width:377.00px;height:14.00px;background:#4b607d;"></div>
<div class="t" style="left:4.5px;top:3.68px;line-height:14px;font-size:10px;font-weight:bold;color:#f4f6fa;letter-spacing:0.02px">Name der Variante festlegen</div>
<div style="left:365.00px;top:5.00px;width:13.00px;height:10.50px;background:#9dafc8;box-sizing:border-box;border-top:1px solid #dfe6f0;border-left:1px solid #dfe6f0;border-right:1px solid #1a2436;border-bottom:1px solid #1a2436;"></div>
<svg style="left:368px;top:6.699999999999989px" width="8" height="7" viewBox="0 0 8 7"><path d="M0.8 0.5 L7.2 6.5 M7.2 0.5 L0.8 6.5" stroke="#0a1020" stroke-width="1.5" fill="none"/></svg>
<div class="t ms" style="left:15.00px;top:25.51px">Aktueller Name</div>
<div style="left:12.30px;top:40.30px;width:279.70px;height:20.50px;background:#fff;box-sizing:border-box;border-top:1.5px solid #4a566a;border-left:1.5px solid #4a566a;border-right:1px solid #d5dce8;border-bottom:1px solid #d5dce8;"></div>
<div class="t" style="left:14.300000000000011px;top:42.29px;line-height:16px;font-size:13px;color:#8a8a8a">VA01</div>
<div class="t ms" style="left:15.30px;top:75.91px">Neuer Name</div>
<div style="left:12.00px;top:89.00px;width:280.00px;height:22.00px;background:#d5dce8;"></div>
<div style="left:12.00px;top:89.00px;width:279.00px;height:21.00px;background:#fff;box-sizing:border-box;border-top:2px solid #222b3c;border-left:2px solid #222b3c;border-right:1px solid #4a566a;border-bottom:1px solid #3a465c;"></div>
<div style="left:14.00px;top:92.00px;width:1.20px;height:15.00px;background:#39404e;"></div>
<div style="left:297.00px;top:89.20px;width:70.70px;height:21.60px;background:#8ea1bb;box-sizing:border-box;border-top:1px solid #d2dae6;border-left:1px solid #d2dae6;border-right:1.5px solid #222c40;border-bottom:1.5px solid #222c40;"></div>
<div style="left:298.00px;top:108.30px;width:68.20px;height:1.00px;background:#65758e;"></div>
<div style="left:365.20px;top:90.20px;width:1.00px;height:19.10px;background:#65758e;"></div>
<div class="t ms c" style="left:297.00px;width:70.70px;top:93.51px">Zufallsname</div>
<div class="t ms" style="left:15.60px;top:124.31px">Da die Namen für die Speicherung des Dateinamens beim Export in das Format</div>
<div class="t ms" style="left:15.60px;top:135.21px">B2063/96 verwendet wird dürfen keine Sonderzeichen enthalten sein. Sonderzeichen</div>
<div class="t ms" style="left:15.60px;top:146.11px">werden bei der Eingabe automatisch durch Leerzeichen ersetzt. Es werden maximal 24</div>
<div class="t ms" style="left:15.60px;top:157.01px">Zeichen gespeichert.</div>
<div style="left:250.80px;top:184.00px;width:56.00px;height:18.50px;background:#141c2c;"></div>
<div style="left:251.80px;top:185.00px;width:54.00px;height:16.50px;background:#8ea1bb;box-sizing:border-box;border-top:1px solid #d2dae6;border-left:1px solid #d2dae6;border-right:1.5px solid #3a465c;border-bottom:1.5px solid #3a465c;"></div>
<div class="t ms c" style="left:250.80px;width:56.00px;top:187.21px">OK</div>
<div style="left:312.00px;top:184.30px;width:55.80px;height:18.20px;background:#8ea1bb;box-sizing:border-box;border-top:1px solid #d2dae6;border-left:1px solid #d2dae6;border-right:1.5px solid #222c40;border-bottom:1.5px solid #222c40;"></div>
<div style="left:313.00px;top:200.00px;width:53.30px;height:1.00px;background:#65758e;"></div>
<div style="left:365.30px;top:185.30px;width:1.00px;height:15.70px;background:#65758e;"></div>
<div class="t ms c" style="left:312.00px;width:55.80px;top:187.21px">Abbrechen</div>
</div>
</div></body></html>
